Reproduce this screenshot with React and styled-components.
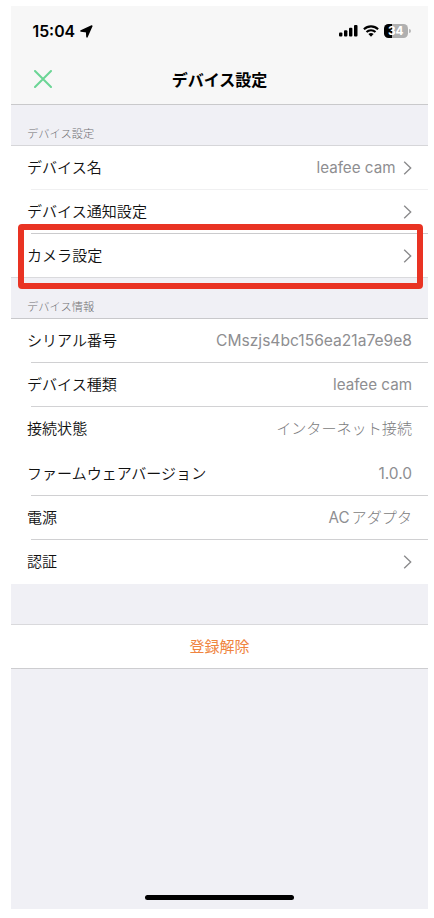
import React from "react";
import styled, { createGlobalStyle } from "styled-components";

const GlobalStyle = createGlobalStyle`
  * { box-sizing: border-box; }
  body { margin: 0; background: #fff; }
`;

const Screen = styled.main`
  display: flex;
  flex-direction: column;
  width: 417px;
  height: 903px;
  margin: 6px 0 0 11px;
  background: #f0f0f5;
  color: #111;
  font-family: Inter, "Noto Sans CJK JP", sans-serif;
  font-size: 15px;
  white-space: nowrap;
`;

const Header = styled.header`
  height: 99px;
  background: #f7f7f7;
  border-bottom: 1px solid #c9c9cb;
`;

const StatusBar = styled.div`
  display: flex;
  align-items: center;
  height: 50px;
  padding: 0 17px 0 21.5px;
`;

const Clock = styled.time`
  width: 47px;
  color: #000;
  font-size: 15.8px;
  font-weight: 600;
`;

const StatusIcons = styled.div`
  display: flex;
  align-items: center;
  gap: 5px;
  margin-left: auto;
`;

const Battery = styled.div`
  display: flex;
  align-items: center;
  justify-content: center;
  width: 24.5px;
  height: 14px;
  border-radius: 4.5px;
  background: linear-gradient(to right, #000 8px, #b0b0b0 8px);
  color: #fff;
  font-size: 11.8px;
  font-weight: 700;
  line-height: 14px;
`;

const BatteryTip = styled.span`
  width: 2px;
  height: 4px;
  margin-left: -4px;
  border-radius: 0 2px 2px 0;
  background: #b8b8b8;
`;

const NavBar = styled.div`
  display: grid;
  grid-template-columns: 60px 1fr 60px;
  align-items: center;
  height: 47px;
`;

const CloseButton = styled.button`
  display: flex;
  padding: 0 0 1px 23px;
  border: 0;
  background: none;
`;

const Title = styled.h1`
  margin: 0;
  color: #000;
  font-size: 16px;
  font-weight: 700;
  line-height: 24px;
  text-align: center;
`;

const SectionTitle = styled.h2`
  display: flex;
  align-items: flex-end;
  height: 41px;
  margin: 0;
  padding: 0 16px 3px;
  border-bottom: 1px solid ${(p) => p.$line || "#d6d6d9"};
  color: #6f6f73;
  font-size: 11.25px;
  font-weight: 300;
  line-height: 16px;
`;

const List = styled.section`
  background: #fff;
`;

const Row = styled.div`
  position: relative;
  display: flex;
  align-items: center;
  justify-content: space-between;
  height: ${(p) => p.$height || 44}px;
  padding: 0 16px;

  &::after {
    content: "";
    position: absolute;
    left: ${(p) => (p.$full ? 0 : 20)}px;
    right: 0;
    bottom: 0;
    height: 1px;
    background: ${(p) => p.$line || "transparent"};
  }
`;

const Label = styled.span`
  font-size: 15.06px;
  font-weight: 350;
  line-height: 22px;
`;

const Value = styled.span`
  display: flex;
  align-items: center;
  gap: 7.5px;
  color: #8e8e91;
  font-size: ${(p) => p.$size || 15.2}px;
  line-height: 22px;
`;

const JapaneseText = styled.span`
  margin-left: ${(p) => p.$gap || 0}px;
  color: #7c7c80;
  font-size: 15.1px;
  font-weight: 300;
`;

const Highlight = styled.div`
  position: absolute;
  z-index: 1;
  top: -10px;
  left: 7px;
  width: 405px;
  height: 65px;
  border: 6px solid #e93323;
  border-radius: 4px;
`;

const RemoveButton = styled.button`
  height: 45px;
  margin-top: 40px;
  padding: 0;
  border: solid;
  border-width: 1px 0;
  border-color: #d9d9dc #cdcdd0 #cdcdd0;
  background: #fff;
  color: #ef8440;
  font: inherit;
  line-height: 22px;
`;

const HomeIndicator = styled.div`
  width: 149px;
  height: 5px;
  margin: auto auto 9px 134px;
  border-radius: 3px;
  background: #000;
`;

const ChevronSvg = styled.svg`
  display: block;
  flex: none;
`;

const Chevron = () => (
  <ChevronSvg width="9" height="14" viewBox="0 0 9 14" fill="none" stroke="#8a8a8c" strokeWidth="1.35">
    <path d="M1.2 .7 7.7 7 1.2 13.3" />
  </ChevronSvg>
);

const deviceInfo = [
  { label: "シリアル番号", value: "CMszjs4bc156ea21a7e9e8", size: 15.6, line: "#d0d0d2" },
  { label: "デバイス種類", value: "leafee cam", line: "#d2d2d4" },
  { label: "接続状態", value: <JapaneseText>インターネット接続</JapaneseText> },
  { label: "ファームウェアバージョン", value: "1.0.0", size: 15.5, line: "#d0d0d2", height: 45 },
  { label: "電源", value: <span>AC<JapaneseText $gap={2}>アダプタ</JapaneseText></span>, line: "#d0d0d2" },
  { label: "認証", link: true },
];

export default function App() {
  return (
    <>
      <GlobalStyle />
      <Screen>
        <Header>
          <StatusBar>
            <Clock>15:04</Clock>
            <svg width="13" height="13" viewBox="0 0 13 13">
              <path
                d="M1 6 11.8 1 7 11.8 6.7 6.6Z"
                stroke="#000"
                strokeWidth="1.6"
                strokeLinejoin="round"
              />
            </svg>
            <StatusIcons>
              <svg width="19" height="12" viewBox="0 0 19 12">
                <rect x="0" y="7.4" width="3.4" height="4.2" rx="1" />
                <rect x="5" y="5.2" width="3.4" height="6.4" rx="1" />
                <rect x="10" y="2.8" width="3.4" height="8.8" rx="1" />
                <rect x="15" y="0" width="3.5" height="11.6" rx="1" />
              </svg>
              <svg width="16" height="12" viewBox="0 0 16 12" fill="none" stroke="#000" strokeWidth="2.1">
                <path d="M.9 4.2a10.3 10.3 0 0 1 14.2 0M3.5 7a6.5 6.5 0 0 1 9 0" />
                <path d="M5.4 9.1a3.8 3.8 0 0 1 5.2 0L8 11.8Z" fill="#000" stroke="none" />
              </svg>
              <Battery>34</Battery>
              <BatteryTip />
            </StatusIcons>
          </StatusBar>
          <NavBar>
            <CloseButton aria-label="閉じる">
              <svg width="18" height="18" viewBox="0 0 18 18" fill="none" stroke="#6bd595" strokeWidth="2" strokeLinecap="round">
                <path d="m1 1 16 16M17 1 1 17" />
              </svg>
            </CloseButton>
            <Title>デバイス設定</Title>
          </NavBar>
        </Header>

        <SectionTitle>デバイス設定</SectionTitle>
        <List>
          <Row $line="#f0f0f1">
            <Label>デバイス名</Label>
            <Value>leafee cam<Chevron /></Value>
          </Row>
          <Row $line="#cbcbcd">
            <Label>デバイス通知設定</Label>
            <Chevron />
          </Row>
          <Row $line="#dadadd" $full>
            <Label>カメラ設定</Label>
            <Chevron />
            <Highlight />
          </Row>
        </List>

        <SectionTitle $line="#c8c8cb">デバイス情報</SectionTitle>
        <List>
          {deviceInfo.map((item) => (
            <Row key={item.label} $line={item.line} $height={item.height}>
              <Label>{item.label}</Label>
              {item.link ? <Chevron /> : <Value $size={item.size}>{item.value}</Value>}
            </Row>
          ))}
        </List>

        <RemoveButton>登録解除</RemoveButton>
        <HomeIndicator />
      </Screen>
    </>
  );
}
